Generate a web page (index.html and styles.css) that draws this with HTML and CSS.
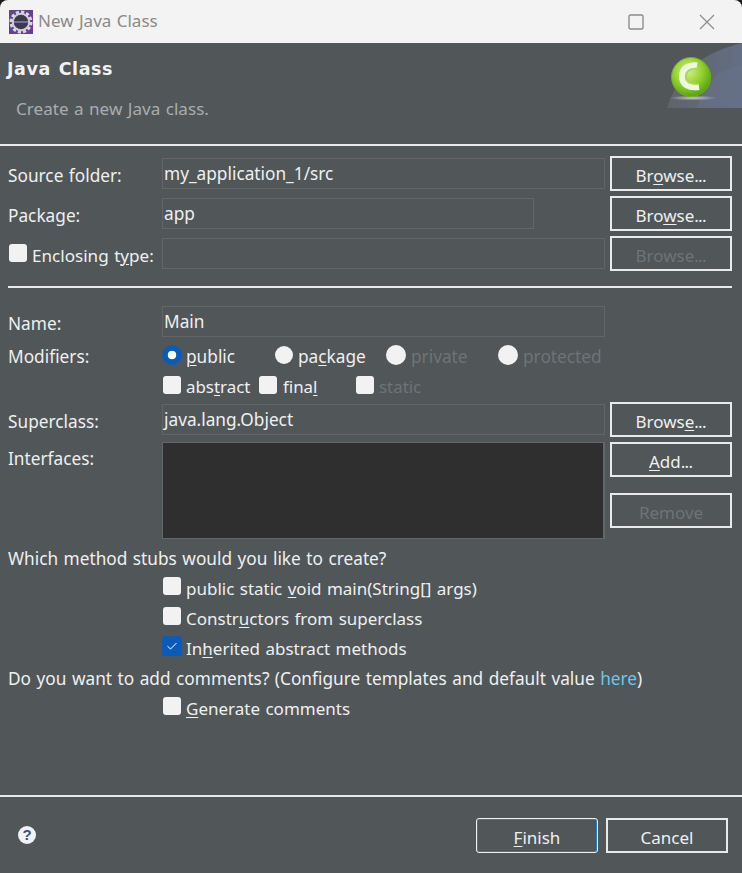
FILE: index.html
```html
<!DOCTYPE html>
<html lang="en">
<head>
<meta charset="utf-8">
<title>New Java Class</title>
<link rel="stylesheet" href="styles.css">
</head>
<body>
<div class="window">
  <header class="titlebar">
    <svg class="appicon" width="24" height="24" viewBox="0 0 24 24">
      <defs><linearGradient id="pg" x1="0" y1="0" x2="1" y2="1"><stop offset="0" stop-color="#5a4a8a"/><stop offset="1" stop-color="#6a3a9a"/></linearGradient></defs>
      <rect width="24" height="24" fill="url(#pg)"/>
      <circle cx="12" cy="12" r="10" fill="none" stroke="#d8d8d8" stroke-width="3" stroke-dasharray="3.2 2"/>
      <circle cx="12" cy="12" r="8.2" fill="none" stroke="#cfcfcf" stroke-width="2"/>
      <circle cx="12" cy="12" r="7" fill="#3a3a48"/>
      <rect x="5" y="11" width="14" height="2" fill="#7a6aa8"/>
    </svg>
    <span class="wintitle">New Java Class</span>
    <svg class="winbtn max" width="16" height="16" viewBox="0 0 16 16"><rect x="1" y="1" width="14" height="14" rx="1.5" fill="none" stroke="#8c8c8c" stroke-width="1.4"/></svg>
    <svg class="winbtn close" width="16" height="16" viewBox="0 0 16 16"><path d="M1 1L15 15M15 1L1 15" fill="none" stroke="#8c8c8c" stroke-width="1.2"/></svg>
  </header>

  <section class="banner">
    <div class="bannertext">
      <h1 class="heading">Java Class</h1>
      <p class="desc">Create a new Java class.</p>
    </div>
    <svg class="bannerimg" width="75" height="66" viewBox="0 0 75 66">
      <defs>
        <linearGradient id="bg1" x1="0" y1="0" x2="1" y2="0"><stop offset="0" stop-color="#5f6468"/><stop offset="1" stop-color="#646e84"/></linearGradient>
        <radialGradient id="ball" cx="0.42" cy="0.35" r="0.7"><stop offset="0" stop-color="#d4f08a"/><stop offset="0.55" stop-color="#8ed02a"/><stop offset="1" stop-color="#4f9a10"/></radialGradient>
        <radialGradient id="shadow"><stop offset="0" stop-color="#c8ccce"/><stop offset="1" stop-color="#c8ccce" stop-opacity="0"/></radialGradient>
      </defs>
      <path d="M0 65C12 28 35 10 75 0V65Z" fill="url(#bg1)"/>
      <path d="M30 65C38 38 52 26 75 22V65Z" fill="#687288" opacity=".6"/>
      <ellipse cx="26" cy="55" rx="24" ry="2.5" fill="url(#shadow)"/>
      <circle cx="24" cy="34" r="19.5" fill="url(#ball)" stroke="#6cb31c" stroke-width="1"/>
      <path d="M30 22.5C22 21 15 25 15 33.5C15 42 22 45.5 32 44" fill="none" stroke="#eef8e0" stroke-width="6"/>
      <path d="M31 26C24 25 19 28 19 33.5C19 39 24 41.5 31 41" fill="none" stroke="#a6dc4e" stroke-width="2"/>
    </svg>
  </section>
  <hr class="sep full">

  <main class="form">
    <div class="row r1">
      <label class="label">Source folder:</label>
      <div class="field">my_application_1/src</div>
      <button class="btn">Br<u>o</u>wse<span class="dots">...</span></button>
    </div>
    <div class="row r1">
      <label class="label">Package:</label>
      <div class="field short">app</div>
      <button class="btn">Bro<u>w</u>se<span class="dots">...</span></button>
    </div>
    <div class="row r1 last">
      <label class="label chklabel"><span class="chk tight"></span><span>Enclosing t<u>y</u>pe:</span></label>
      <div class="field"></div>
      <button class="btn off">Browse<span class="dots">...</span></button>
    </div>

    <hr class="sep inner">

    <div class="row namerow">
      <label class="label">Name:</label>
      <div class="field">Main</div>
    </div>
    <div class="row modrow">
      <label class="label flat">Modifiers:</label>
      <div class="opts">
        <span class="opt w112"><span class="radio on"></span><span class="t4"><u>p</u>ublic</span></span>
        <span class="opt w112"><span class="radio small"></span><span class="t5">pa<u>c</u>kage</span></span>
        <span class="opt w112 dim"><span class="radio"></span><span class="t5">private</span></span>
        <span class="opt dim"><span class="radio"></span><span class="t5">protected</span></span>
      </div>
    </div>
    <div class="row flagrow">
      <span class="label"></span>
      <div class="opts">
        <span class="opt w96"><span class="chk"></span><span class="t5">abs<u>t</u>ract</span></span>
        <span class="opt w96b"><span class="chk"></span><span class="t6">fina<u>l</u></span></span>
        <span class="opt dim"><span class="chk"></span><span class="t5">static</span></span>
      </div>
    </div>
    <div class="row superrow">
      <label class="label">Superclass:</label>
      <div class="field">java.lang.Object</div>
      <button class="btn">Brows<u>e</u><span class="dots">...</span></button>
    </div>
    <div class="row listrow">
      <label class="label flat toplabel">Interfaces:</label>
      <div class="list"></div>
      <div class="listbtns">
        <button class="btn"><u>A</u>dd<span class="dots">...</span></button>
        <button class="btn off">Remove</button>
      </div>
    </div>

    <p class="line which">Which method stubs would you like to create?</p>
    <div class="checks">
      <span class="opt"><span class="chk"></span><span class="t5">public static <u>v</u>oid main(String[] args)</span></span>
      <span class="opt"><span class="chk"></span><span class="t5">Constr<u>u</u>ctors from superclass</span></span>
      <span class="opt"><span class="chk on"><svg width="12" height="12" viewBox="0 0 12 12"><path d="M1.5 6.2L4.5 9L10.5 3" fill="none" stroke="#fff" stroke-width="1"/></svg></span><span class="t4">In<u>h</u>erited abstract methods</span></span>
    </div>
    <p class="line comments">Do you want to add comments? (Configure templates and default value <a class="link">here</a>)</p>
    <div class="checks gen">
      <span class="opt"><span class="chk"></span><span class="t5"><u>G</u>enerate comments</span></span>
    </div>
  </main>

  <hr class="sep full">
  <footer class="footer">
    <span class="help">?</span>
    <button class="btn default"><u>F</u>inish</button>
    <button class="btn">Cancel</button>
  </footer>
</div>
</body>
</html>
```
FILE: styles.css
```css
* { box-sizing: border-box; }
html, body { margin: 0; padding: 0; background: #1c1c1c; }
body { width: 742px; height: 873px; overflow: hidden; font-family: "Noto Sans", "Open Sans", sans-serif; font-size: 17.25px; word-spacing: 1px; color: #eef0f0; }
.window { width: 742px; height: 873px; background: #515659; border-radius: 8px 8px 0 0; overflow: hidden; display: flex; flex-direction: column; }
u { text-underline-offset: 2px; text-decoration-thickness: 1px; }

.titlebar { height: 43px; flex: none; background: #f3f3f3; display: flex; align-items: center; padding-left: 9px; }
.appicon { flex: none; }
.wintitle { margin: -2px 0 0 5px; font-size: 17px; color: #8a8a8a; flex: 1; }
.winbtn { flex: none; }
.max { margin-right: 55px; }
.close { margin-right: 27px; }

.banner { height: 101px; flex: none; display: flex; justify-content: space-between; align-items: flex-start; }
.bannertext { padding: 14px 0 0 7px; }
.heading { margin: 0; font-family: "DejaVu Sans", sans-serif; font-size: 17.5px; letter-spacing: .6px; font-weight: 700; line-height: 24px; color: #f2f2f2; }
.desc { margin: 17px 0 0 9px; font-size: 17.1px; line-height: 22px; color: #a8adaf; }

.sep { border: 0; margin: 0; height: 2px; background: #e9e9e9; flex: none; }
.inner { margin: 15px 2px 18px 0; width: 724px; }

.form { padding: 10px 10px 0 8px; display: flex; flex-direction: column; flex: 1; }
.row { display: flex; align-items: center; }
.r1 { height: 35px; margin-bottom: 5px; }
.r1.last { margin-bottom: 0; }
.namerow { height: 31px; }
.modrow { height: 36px; padding-top: 2px; }
.flagrow { height: 26px; }
.flagrow .opts { font-size: 16.9px; }
.superrow { height: 35px; margin-top: 3px; }
.listrow { height: 97px; margin-top: 5px; align-items: flex-start; }
.label { width: 154px; flex: none; padding-top: 4px; line-height: 24px; display: flex; align-items: center; }
.label.flat { padding-top: 2px; }
.toplabel { margin-top: 3px; }
.chklabel { gap: 5px; padding-left: 1px; white-space: nowrap; font-size: 17.1px; }
.chklabel .chk { margin-top: -6px; }
.field { width: 443px; height: 31px; flex: none; border: 1px solid #636668; padding-left: 1px; line-height: 29px; margin-right: 5px; }
.short { width: 372px; margin-right: 76px; }
.list { width: 443px; height: 97px; margin-right: 5px; flex: none; background: #2f2f2f; border: 1px solid #646769; border-right-width: 2px; }
.listbtns { display: flex; flex-direction: column; gap: 16px; }

.btn { width: 122px; height: 35px; flex: none; background: #515659; border: 2px solid #eaeaea; padding: 4px 0 0; font: inherit; font-size: 17px; word-spacing: 0; color: #eef0f0; line-height: 24px; }
.dots { letter-spacing: -.7px; margin-right: .7px; }
.off { color: #6f7375; }
.default { border: 1px solid #f0f0f0; box-shadow: inset 0 0 0 1px #1b7fc9; border-radius: 3px; margin-right: 8px; padding-top: 5px; }
.opts { display: flex; align-items: center; }
.opt { display: flex; align-items: center; white-space: nowrap; }
.t4 { margin-left: 4px; }
.t5 { margin-left: 5px; }
.t6 { margin-left: 6px; }
.w112 { width: 112px; }
.w96 { width: 96px; }
.w96b { width: 97px; }
.dim { color: #6f7375; }

.radio { width: 20px; height: 20px; border-radius: 50%; background: #f2f2f2; flex: none; margin-top: -3px; }
.radio.small { width: 18px; height: 18px; margin-left: 1px; }
.radio.on { background: radial-gradient(circle, #fff 0 4px, #0a5cb8 4.6px); }
.chk { width: 18px; height: 18px; margin: -3px 0 0 1px; border-radius: 3px; background: #f2f2f2; flex: none; display: flex; align-items: center; justify-content: center; }
.chk.tight { margin-left: 0; }
.chk.on { width: 20px; height: 20px; margin-left: 0; background: #0a5cb8; }

.line { margin: 0; line-height: 24px; }
.which { margin: 8px 0 1px; }
.checks { display: flex; flex-direction: column; padding-left: 154px; font-size: 17px; }
.checks .opt { height: 30px; }
.checks .opt > span:last-child { padding-top: 3px; }
.comments { margin-top: 5px; }
.gen { margin-top: 1px; }
.gen .opt > span:last-child { padding-top: 2px; }
.link { color: #6ec6e6; }

.footer { height: 76px; flex: none; display: flex; align-items: flex-start; padding: 21px 14px 0 18px; }
.help { width: 18px; height: 18px; margin: 8px auto 0 0; border-radius: 50%; background: #f0f2f4; color: #3f4f78; font: 700 15px/18px "Liberation Sans", sans-serif; text-align: center; }
```
